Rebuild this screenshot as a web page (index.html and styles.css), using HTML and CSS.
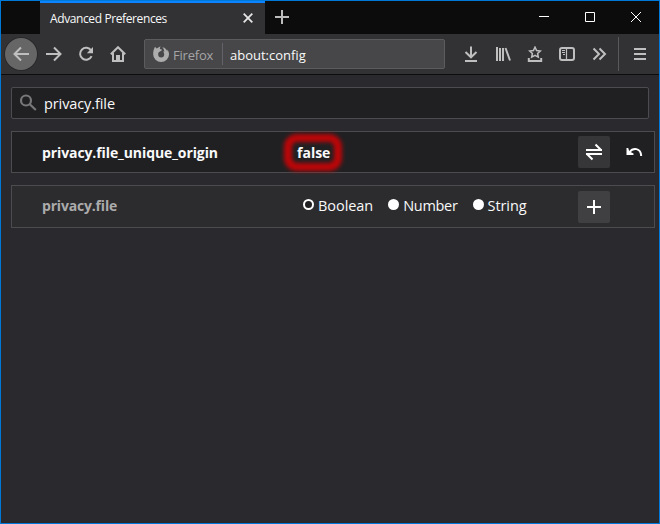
FILE: index.html
```html
<!DOCTYPE html>
<html lang="en">
<head>
<meta charset="utf-8">
<title>Advanced Preferences</title>
<link rel="stylesheet" href="styles.css">
</head>
<body>
<div class="window">
  <header class="titlebar">
    <div class="tab">
      <span class="tab-title">Advanced Preferences</span>
      <svg class="tab-close" width="10" height="10" viewBox="0 0 10 10"><path d="M.7.7l8.6 8.6M9.3.7L.7 9.3"/></svg>
    </div>
    <svg class="new-tab" width="14" height="14" viewBox="0 0 14 14"><path d="M7 0v14M0 7h14"/></svg>
    <div class="controls">
      <svg width="46" height="32" viewBox="0 0 46 32"><path d="M18 15.500h10"/></svg>
      <svg width="46" height="32" viewBox="0 0 46 32"><path d="M18.500 11.500h9v9h-9z"/></svg>
      <svg width="46" height="32" viewBox="0 0 46 32"><path d="M18 11l10 10M28 11L18 21"/></svg>
    </div>
  </header>
  <nav class="toolbar">
    <div class="back"><svg class="icon" viewBox="0 0 16 16"><path d="M16 8H1.500M8 1.500L1.500 8 8 14.500"/></svg></div>
    <div class="tool"><svg class="icon" viewBox="0 0 16 16"><path d="M0 8h14.500M8 1.500L14.500 8 8 14.500"/></svg></div>
    <div class="tool"><svg class="icon" viewBox="0 0 16 16"><path d="M13.200 4.600A6 6 0 1 0 13.600 10.200"/><path class="solid" d="M15 1v6.200H8.800z"/></svg></div>
    <div class="tool"><svg class="icon" viewBox="0 0 16 16"><path d="M.8 8.300L8 1.200l7.200 7.100M3 7v8h10V7"/><path class="solid" d="M6 15V9h4v6z"/></svg></div>
    <div class="urlbar">
      <svg class="firefox" width="16" height="16" viewBox="0 0 16 16"><path d="M2 .8l1.600 1.800C5 1.400 6.500.6 7.800.4 7 1.200 6.800 2 6.900 3c1 .2 2.200.4 2 1.200L7 5.400C5.600 6 5 7 5.200 8.400a3 3 0 0 0 6 0c0-1.400-.7-2.600-1.300-3.200.6 0 1 .2 1.400.5C11.200 4 10.500 2.400 9.400 1.200c3 .4 4.500 2.600 4.800 4.200l.2-1.800C15.600 5 16 7 16 8.400A7.900 7.500 0 0 1 .2 8.400C.1 5.600.8 3 2 .8z"/></svg>
      <span class="identity">Firefox</span>
      <span class="address">about:config</span>
    </div>
    <div class="tools">
      <div class="tool"><svg class="icon" viewBox="0 0 16 16"><path d="M8 .5V11M2.500 6L8 11.300 13.500 6M2 15h12"/></svg></div>
      <div class="tool"><svg class="icon" viewBox="0 0 16 16"><path d="M2 1v14M5 2v13M8 2v13M10.500 2l4.500 12.500"/></svg></div>
      <div class="tool"><svg class="icon" viewBox="0 0 16 16"><path class="star" d="M8 1.200l1.600 3.300 3.700.5-2.700 2.500.7 3.600L8 9.400l-3.300 1.700.7-3.600L2.700 5l3.700-.5z"/><path d="M1.800 12v3h12.400v-3"/></svg></div>
      <div class="tool"><svg class="icon" viewBox="0 0 16 16"><rect x="1" y="2" width="14" height="12" rx="2"/><path class="thin" d="M7.500 2v12M3 4.500h3M3 6.500h3M4 8.500h2"/></svg></div>
      <div class="tool"><svg class="icon" viewBox="0 0 16 16"><path d="M2.500 2.500L8 8l-5.500 5.500M8.500 2.500L14 8l-5.500 5.500"/></svg></div>
      <div class="menu"><svg class="icon" viewBox="0 0 16 16"><path d="M2 3h12M2 8h12M2 13h12"/></svg></div>
    </div>
  </nav>
  <main class="config">
    <div class="search">
      <svg width="18" height="18" viewBox="0 0 18 18"><circle cx="7" cy="6.500" r="5"/><path d="M10.800 10.300l6 5.700"/></svg>
      <span class="query">privacy.file</span>
    </div>
    <div class="pref">
      <span class="name">privacy.file_unique_origin</span>
      <span class="value"><span class="marked">false</span></span>
      <span class="action"><svg width="18" height="18" viewBox="0 0 18 18"><path d="M1 7h16M10.500 1.500L16 7M1 11h16M2 11l5.500 5.500"/></svg></span>
      <span class="action plain"><svg width="18" height="18" viewBox="0 0 18 18"><path d="M4.500 9C8 4.500 15.800 4.500 16.200 13"/><path class="fill" d="M1.500 5h1.700l1 3.200 4.300 2.200v1.600h-7z"/></svg></span>
    </div>
    <div class="pref add">
      <span class="name">privacy.file</span>
      <span class="value types">
        <span class="type"><i class="radio checked"></i><span class="boolean">Boolean</span></span>
        <span class="type"><i class="radio"></i><span class="number">Number</span></span>
        <span class="type"><i class="radio"></i><span class="string">String</span></span>
      </span>
      <span class="action"><svg width="18" height="18" viewBox="0 0 18 18"><path d="M9 2v14M2 9h14"/></svg></span>
    </div>
  </main>
</div>
</body>
</html>
```
FILE: styles.css
```css
* { box-sizing: border-box; }
body {
  margin: 0;
  background: #2a2a2e;
  font-family: "Open Sans", "Noto Sans", sans-serif;
  color: #f9f9fa;
}
svg { display: block; flex: none; fill: none; stroke: #fff; stroke-width: 2; }
span { white-space: nowrap; }
.window { height: 524px; border: 1px solid #0078d7; overflow: hidden; }

.titlebar { display: flex; height: 33px; background: #0c0c0d; }
.tab {
  display: flex;
  align-items: center;
  justify-content: space-between;
  width: 225px;
  margin-left: 39px;
  padding: 0 12px 0 10px;
  background: #323234;
  border-top: 2px solid #0a84ff;
}
.tab-title { font-size: 12px; letter-spacing: -.39px; }
.tab-close { position: relative; top: -1px; stroke: #e5e5e6; stroke-width: 1.8; }
.new-tab { margin: 9px 0 0 10px; stroke: #bcbcbd; }
.controls { display: flex; margin-left: auto; }
.controls svg { stroke-width: 1; }

.toolbar {
  display: flex;
  align-items: center;
  height: 41px;
  padding: 0 3px 1px 4px;
  background: #323234;
  border-bottom: 1px solid #0c0c0d;
}
.back, .tool { display: grid; place-items: center; width: 32px; height: 32px; }
.back { background: #666667; border-radius: 50%; box-shadow: 0 0 0 1px #29292b; }
.back + .tool { margin-left: 1px; }
.icon { width: 16px; height: 16px; stroke: #bfbfc0; }
.icon .solid { fill: #bfbfc0; stroke: none; }
.icon .thin { stroke-width: 1.2; }
.icon .star { stroke-width: 1.5; }
.urlbar {
  display: flex;
  align-items: center;
  width: 301px;
  height: 30px;
  margin-left: 10px;
  padding-left: 8px;
  background: #474749;
  border: 1px solid #5c5c5e;
  border-radius: 2px;
}
.firefox { fill: #adadae; stroke: none; }
.identity {
  width: 54px;
  height: 22px;
  padding-left: 4px;
  border-right: 1px solid #636369;
  font-size: 13px;
  line-height: 24px;
  letter-spacing: -.2px;
  color: #a5a5a6;
}
.address { padding: 2px 0 0 7px; font-size: 13px; }
.tools { display: flex; align-items: center; margin-left: 10px; }
.menu { display: flex; align-items: center; height: 34px; margin-left: 3px; padding-left: 13px; border-left: 1px solid #59595b; }

.config { padding: 12px 4px 0 10px; font-size: 14.5px; }
.search {
  display: flex;
  align-items: center;
  width: 638px;
  height: 32px;
  padding-left: 7px;
  background: #202022;
  border: 1px solid #4c4c4f;
  border-radius: 2px;
}
.search svg { stroke: #77777a; stroke-width: 2.2; }
.query { margin-left: 7px; letter-spacing: -.1px; }
.pref {
  display: flex;
  align-items: center;
  height: 42px;
  margin-top: 12px;
  padding-left: 30px;
  background: #202022;
  border: 1px solid #4c4c4f;
}
.name { width: 255px; font-size: 14px; font-weight: 700; letter-spacing: -.1px; }
.value { width: 281px; }
.marked {
  display: inline-block;
  position: relative;
  font-size: 14px;
  font-weight: 700;
}
.marked::before {
  content: "";
  position: absolute;
  inset: -9px -12px -9px -13px;
  border: 8px solid #be0508;
  border-radius: 13px;
  filter: blur(2px);
}
.action { display: grid; place-items: center; width: 32px; height: 32px; background: #363638; border-radius: 2px; }
.action.plain { margin-left: 8px; background: none; }
.action .fill { fill: #fff; stroke: none; }
.pref.add { height: 43px; background: #2c2c2e; }
.add .name { padding-bottom: 2px; color: #ababac; letter-spacing: -.18px; }
.add .action { background: #404042; }
.types { display: flex; padding: 0 0 3px 6px; }
.type { display: flex; align-items: center; margin-right: 15px; }
.radio { width: 11px; height: 11px; margin: -1px 4px 0 0; background: #fff; border-radius: 50%; }
.radio.checked { background: #202022; border: 2px solid #fff; }
.boolean { letter-spacing: -.05px; }
.number { letter-spacing: -.3px; }
.string { letter-spacing: -.1px; }
```
